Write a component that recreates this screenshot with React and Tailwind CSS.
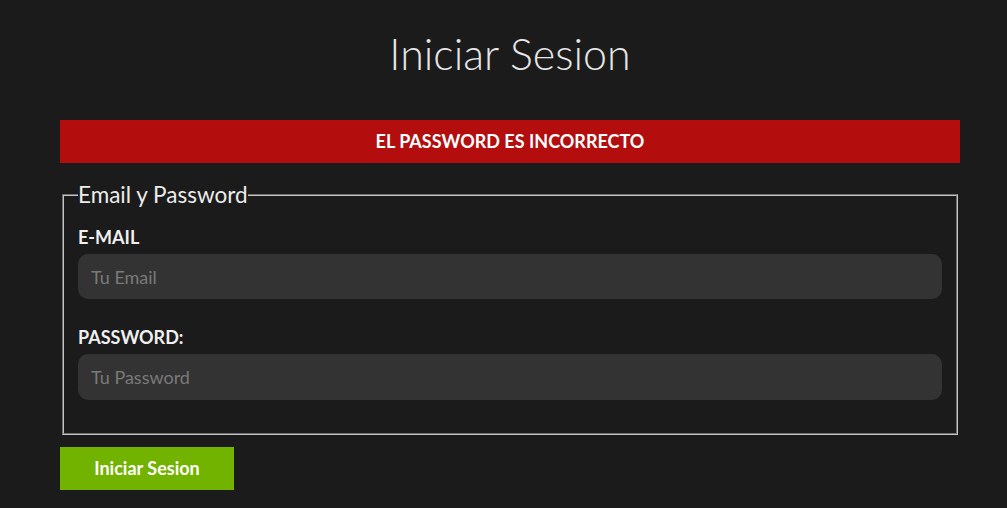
import React from 'react';

export default function App() {
  return (
    <div className="min-h-[508px] w-full bg-[#1b1b1b] px-[60px] font-['Lato','Noto_Sans',sans-serif] text-[#e8e8e8]">
      <div className="w-[900px] pt-[26px]">
        <h1 className="text-center text-[43px] font-light leading-[56px] text-[#e6e6e6]">
          Iniciar Sesion
        </h1>

        {/* alerta de error */}
        <div className="mt-[38px] flex h-[43px] items-center justify-center bg-[#b30d0d] text-[18px] font-bold uppercase text-white">
          El password es incorrecto
        </div>

        <form className="mt-[20px]">
          <fieldset className="mx-[2px] border-2 border-[#c4c4c4] px-[14px] pb-[33px] pt-[19px] [border-style:groove]">
            <legend className="px-0 text-[22.5px] leading-[24px] text-[#ececec]">Email y Password</legend>

            <div className="flex flex-col">
              <label className="text-[18px] font-bold uppercase leading-[22px] text-[#f0f0f0]">E-mail</label>
              <input
                type="email"
                placeholder="Tu Email"
                className="mt-[6px] h-[45px] rounded-[10px] bg-[#333333] px-[13px] text-[18px] text-[#ddd] outline-none placeholder:text-[#7a7a7a]"
              />
            </div>

            <div className="mt-[27px] flex flex-col">
              <label className="text-[18px] font-bold uppercase leading-[22px] text-[#f0f0f0]">Password:</label>
              <input
                type="password"
                placeholder="Tu Password"
                className="mt-[6px] h-[46px] rounded-[10px] bg-[#333333] px-[13px] text-[18px] text-[#ddd] outline-none placeholder:text-[#7a7a7a]"
              />
            </div>
          </fieldset>

          <button
            type="submit"
            className="mt-[12px] h-[43px] w-[174px] bg-[#72b300] text-[18px] font-bold text-white"
          >
            Iniciar Sesion
          </button>
        </form>
      </div>
    </div>
  );
}
